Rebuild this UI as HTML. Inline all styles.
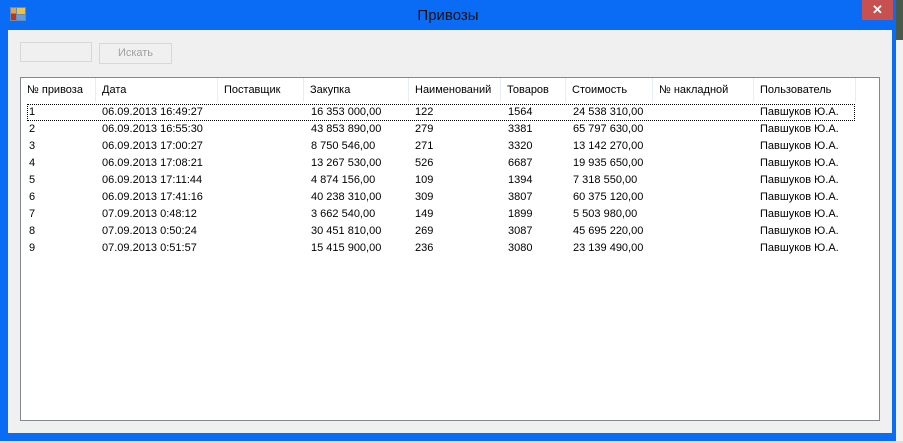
<!DOCTYPE html>
<html><head><meta charset="utf-8"><style>
*{margin:0;padding:0;box-sizing:border-box}
body{width:903px;height:443px;overflow:hidden;background:#e8e8e8;font-family:"Liberation Sans",sans-serif;font-size:11px;color:#000;position:relative}
.win{position:absolute;left:0;top:0;width:896px;height:441px;background:#0a6cf5}
.title{position:absolute;left:0;width:896px;top:7px;text-align:center;font-size:15px;color:#111}
.close{position:absolute;left:862px;top:0;width:31px;height:20px;background:#c75050;color:#fff;text-align:center;font-size:13px;line-height:20px;font-weight:bold}
.client{position:absolute;left:8px;top:30px;width:884px;height:403px;background:#f0f0f0}
.tb{position:absolute;left:20px;top:42px;width:72px;height:20px;border:1px solid #d8d8d8;background:#f0f0f0}
.btn{position:absolute;left:99px;top:43px;width:73px;height:21px;border:1px solid #d8d8d8;background:#f0f0f0;color:#a0a0a0;text-align:center;line-height:19px}
.list{position:absolute;left:20px;top:77px;width:860px;height:344px;background:#fff;border:1px solid #828790}
.h{position:absolute;top:0;height:24px;line-height:24px;padding-left:6px;border-right:1px solid #e5eefb;white-space:nowrap}
.r{position:absolute;height:17px;line-height:17px;white-space:nowrap}
.right{position:absolute;left:896px;top:0;width:7px;height:443px;background:#f2f2f2}
.bot{position:absolute;left:0;top:441px;width:903px;height:2px;background:#dcdcdc}
</style></head><body>
<div class="win"></div>
<div class="right"><div style="position:absolute;left:0;top:0;width:7px;height:40px;background:#4a5a4a"></div></div>
<div class="bot"></div>
<svg style="position:absolute;left:10px;top:7px" width="16" height="14"><rect x="0" y="0" width="16" height="14" fill="#6a8ab0"/><rect x="1" y="1" width="5" height="5" fill="#e2a24a"/><rect x="7" y="1" width="8" height="6" fill="#f0c040"/><rect x="1" y="7" width="5" height="6" fill="#c03020"/><rect x="7" y="8" width="8" height="5" fill="#60a0e0"/></svg>
<div class="title">Привозы</div>
<div class="close">✕</div>
<div class="client"></div>
<div class="tb"></div>
<div class="btn">Искать</div>
<div class="list" id="l">
<div class="h" style="left:0;width:75px">№ привоза</div>
<div class="h" style="left:75px;width:122px">Дата</div>
<div class="h" style="left:197px;width:86px">Поставщик</div>
<div class="h" style="left:283px;width:105px">Закупка</div>
<div class="h" style="left:388px;width:92px">Наименований</div>
<div class="h" style="left:480px;width:65px">Товаров</div>
<div class="h" style="left:545px;width:87px">Стоимость</div>
<div class="h" style="left:632px;width:101px">№ накладной</div>
<div class="h" style="left:733px;width:102px">Пользователь</div>
<div style="position:absolute;left:6px;top:26px;width:828px;height:17px;border:1px dotted #000"></div>
</div>
<script>
var d=[["1","06.09.2013 16:49:27","16 353 000,00","122","1564","24 538 310,00"],["2","06.09.2013 16:55:30","43 853 890,00","279","3381","65 797 630,00"],["3","06.09.2013 17:00:27","8 750 546,00","271","3320","13 142 270,00"],["4","06.09.2013 17:08:21","13 267 530,00","526","6687","19 935 650,00"],["5","06.09.2013 17:11:44","4 874 156,00","109","1394","7 318 550,00"],["6","06.09.2013 17:41:16","40 238 310,00","309","3807","60 375 120,00"],["7","07.09.2013 0:48:12","3 662 540,00","149","1899","5 503 980,00"],["8","07.09.2013 0:50:24","30 451 810,00","269","3087","45 695 220,00"],["9","07.09.2013 0:51:57","15 415 900,00","236","3080","23 139 490,00"]];
var x=[8,81,290,394,487,552,739],h="";
d.forEach(function(r,i){var t=26+i*17;var v=[r[0],r[1],r[2],r[3],r[4],r[5],"Павшуков Ю.А."];v.forEach(function(s,j){h+='<div class="r" style="left:'+x[j]+'px;top:'+t+'px">'+s+'</div>'});});
document.getElementById('l').insertAdjacentHTML('beforeend',h);
</script>
</body></html>
